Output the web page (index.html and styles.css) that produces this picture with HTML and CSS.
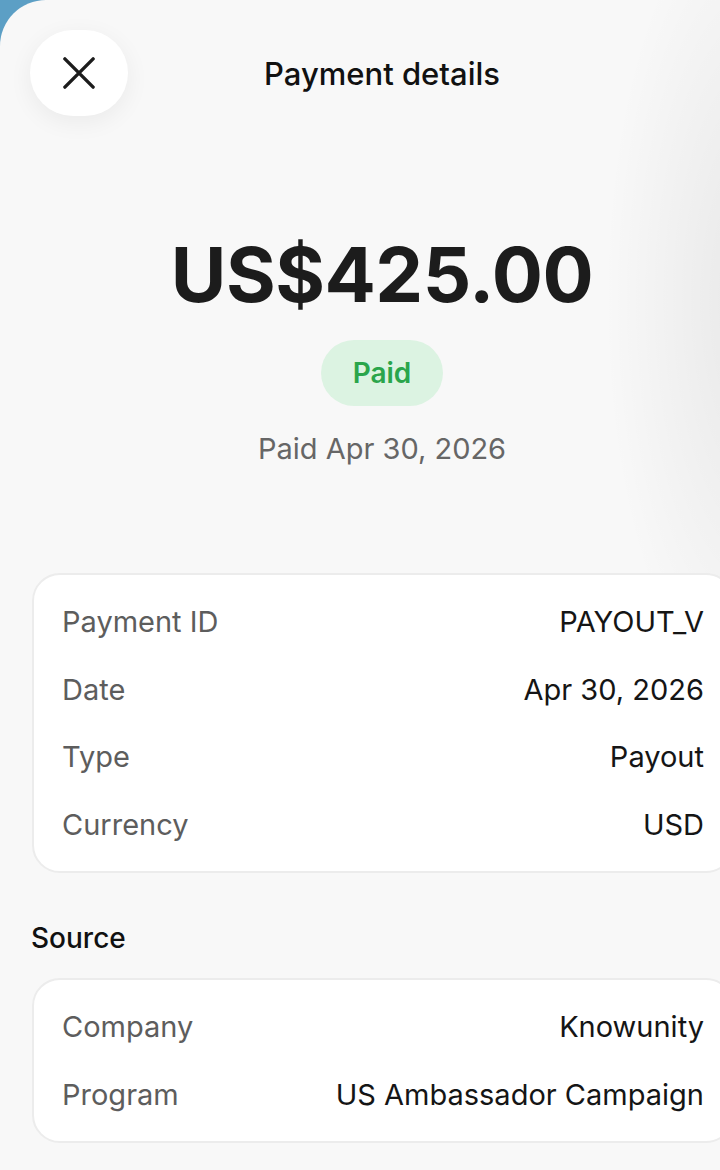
FILE: index.html
```html
<!DOCTYPE html>
<html lang="en">
<head>
    <meta charset="UTF-8">
    <meta name="viewport" content="width=device-width, initial-scale=1.0">
    <title>Payment details</title>
    <link rel="stylesheet" href="styles.css">
</head>
<body>
    <div class="sheet">
        <header class="topbar">
            <button class="close-button" aria-label="Close">
                <svg width="34" height="34" viewBox="0 0 34 34">
                    <path d="M2 2 L32 32 M32 2 L2 32" stroke="#1c1c1c" stroke-width="3.6" stroke-linecap="round" fill="none"/>
                </svg>
            </button>
            <h1 class="title">Payment details</h1>
            <span></span>
        </header>

        <section class="summary">
            <div class="amount">US$425.00</div>
            <span class="status-pill">Paid</span>
            <div class="paid-date">Paid Apr 30, 2026</div>
        </section>

        <section class="details">
            <div class="card">
                <div class="row"><span class="label">Payment ID</span><span class="value">PAYOUT_V</span></div>
                <div class="row"><span class="label">Date</span><span class="value">Apr 30, 2026</span></div>
                <div class="row"><span class="label">Type</span><span class="value">Payout</span></div>
                <div class="row"><span class="label">Currency</span><span class="value">USD</span></div>
            </div>

            <h2 class="section-title">Source</h2>
            <div class="card">
                <div class="row"><span class="label">Company</span><span class="value">Knowunity</span></div>
                <div class="row"><span class="label">Program</span><span class="value">US Ambassador Campaign</span></div>
            </div>
        </section>
    </div>
</body>
</html>
```

FILE: styles.css
```css
body {
    margin: 0;
    padding: 0;
    background: #5c9fc5;
    font-family: Inter, "Noto Sans", sans-serif;
    color: #1a1a1a;
    overflow: hidden;
}

.sheet {
    width: 764px;
    min-height: 1200px;
    background:
        radial-gradient(ellipse 160px 420px at 100% 300px, rgba(0, 0, 0, 0.07), rgba(0, 0, 0, 0) 100%),
        #f8f8f8;
    border-top-left-radius: 46px;
    box-sizing: border-box;
    padding: 30px 30px 0 30px;
}

.topbar {
    display: grid;
    grid-template-columns: 1fr auto 1fr;
    align-items: center;
}

.close-button {
    width: 98px;
    height: 86px;
    border: none;
    border-radius: 43px;
    background: #ffffff;
    box-shadow: 0 6px 24px rgba(0, 0, 0, 0.06);
    display: flex;
    align-items: center;
    justify-content: center;
    padding: 0;
}

.close-button svg {
    width: 32px;
    height: 32px;
}

.title {
    margin: 0;
    font-size: 31px;
    font-weight: 500;
    letter-spacing: 0;
    color: #111;
}

.summary {
    display: flex;
    flex-direction: column;
    align-items: center;
    margin-top: 120px;
}

.amount {
    font-size: 76px;
    font-weight: 700;
    letter-spacing: -0.5px;
    line-height: 1;
    color: #1c1c1c;
}

.status-pill {
    margin-top: 28px;
    width: 122px;
    height: 66px;
    border-radius: 33px;
    background: #dcf3e2;
    color: #2aa54b;
    font-size: 28px;
    font-weight: 600;
    display: flex;
    align-items: center;
    justify-content: center;
}

.paid-date {
    margin-top: 25px;
    font-size: 29px;
    color: #666;
}

.details {
    margin-top: 107px;
}

.card {
    background: #ffffff;
    border: 2px solid #ececec;
    border-radius: 28px;
    padding: 13px 28px 13px 28px;
    margin-left: 2px;
}

.row {
    display: flex;
    justify-content: space-between;
    align-items: center;
    height: 67.5px;
    font-size: 29px;
}

.label {
    color: #5d5d5d;
}

.value {
    color: #151515;
}

.section-title {
    margin: 48px 0 23px 1px;
    font-size: 28px;
    font-weight: 500;
    color: #111;
}
```
